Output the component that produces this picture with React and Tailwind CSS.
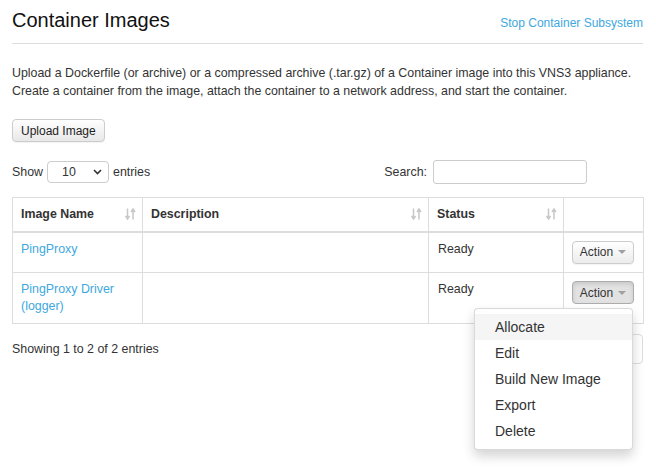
import { useState } from 'react'

function SortIcon() {
  return (
    <svg width="11" height="12" viewBox="0 0 11 12" className="shrink-0 text-[#c8c8c8]">
      <path d="M2.5 0.5 V10.5 M0.5 8 L2.5 11 L4.5 8" fill="none" stroke="currentColor" strokeWidth="1.5" />
      <path d="M8 11.5 V1.5 M6 4 L8 1 L10 4" fill="none" stroke="currentColor" strokeWidth="1.5" />
    </svg>
  )
}

function Caret() {
  return <span className="ml-[5px] inline-block h-0 w-0 border-x-[4px] border-t-[4px] border-x-transparent border-t-[#a0a0a0]" />
}

function ActionButton({ active }) {
  return (
    <button
      className={
        'flex h-[23px] w-[62px] items-center justify-center rounded-[4px] border text-[12px] text-[#333] ' +
        (active
          ? 'border-[#adadad] bg-[#e2e2e2] shadow-[inset_0_2px_4px_rgba(0,0,0,0.12)]'
          : 'border-[#ccc] bg-gradient-to-b from-white to-[#ececec] shadow-[0_1px_1px_rgba(0,0,0,0.05)]')
      }
    >
      Action
      <Caret />
    </button>
  )
}

const menuItems = ['Allocate', 'Edit', 'Build New Image', 'Export', 'Delete']

export default function App() {
  const [hover, setHover] = useState('Allocate')
  const rows = [
    { name: ['PingProxy'], status: 'Ready' },
    { name: ['PingProxy Driver', '(logger)'], status: 'Ready', open: true },
  ]

  return (
    <div className="min-h-screen bg-white pl-[12px] pr-[13px] font-['Liberation_Sans',Arial,sans-serif] text-[12.4px] text-[#333]">
      <div className="box-border flex h-[44px] items-baseline justify-between border-b border-[#ddd] pt-[8px]">
        <h1 className="text-[20px] leading-[24px] text-[#111]">Container Images</h1>
        <a className="text-[12px] text-[#3ea8de]">Stop Container Subsystem</a>
      </div>

      <p className="mt-[20px] leading-[18px]">
        Upload a Dockerfile (or archive) or a compressed archive (.tar.gz) of a Container image into this VNS3 appliance.
        <br />
        Create a container from the image, attach the container to a network address, and start the container.
      </p>

      <button className="mt-[19px] h-[23px] rounded-[4px] border border-[#ccc] bg-gradient-to-b from-white to-[#e8e8e8] px-[8px] text-[12px] text-[#222] shadow-[0_1px_1px_rgba(0,0,0,0.05)]">
        Upload Image
      </button>

      <div className="mt-[18px] flex items-center">
        <span>Show</span>
        <div className="mx-[4px] flex h-[22px] w-[62px] items-center justify-between rounded-[4px] border border-[#ccc] bg-white pl-[14px] pr-[6px]">
          <span>10</span>
          <svg width="9" height="6" viewBox="0 0 9 6">
            <path d="M1 1 L4.5 4.5 L8 1" fill="none" stroke="#333" strokeWidth="1.6" />
          </svg>
        </div>
        <span>entries</span>
        <div className="ml-auto mr-[56px] flex items-center gap-[6px]">
          <span>Search:</span>
          <div className="h-[24px] w-[154px] rounded-[3px] border border-[#ccc] bg-white" />
        </div>
      </div>

      <table className="mt-[13px] w-full table-fixed border-collapse">
        <colgroup>
          <col className="w-[130px]" />
          <col className="w-[286px]" />
          <col className="w-[135px]" />
          <col className="w-[80px]" />
        </colgroup>
        <thead>
          <tr className="h-[34px]">
            {['Image Name', 'Description', 'Status'].map((h) => (
              <th key={h} className="border border-b-2 border-[#ddd] pl-[8px] pr-[6px] text-left align-middle font-bold">
                <div className="flex items-center justify-between">
                  <span>{h}</span>
                  <SortIcon />
                </div>
              </th>
            ))}
            <th className="border border-b-2 border-[#ddd]" />
          </tr>
        </thead>
        <tbody>
          {rows.map((r, i) => (
            <tr key={i} className={r.open ? 'h-[51px]' : 'h-[41px]'}>
              <td className="border border-[#ddd] px-[8px] pt-[8px] align-top leading-[17px] text-[#3ea8de]">
                {r.name.map((n) => (
                  <div key={n}>{n}</div>
                ))}
              </td>
              <td className="border border-[#ddd]" />
              <td className="border border-[#ddd] px-[9px] pt-[8px] align-top leading-[17px]">{r.status}</td>
              <td className="border border-[#ddd] px-[8px] pt-[8px] align-top">
                <div className="relative">
                  <ActionButton active={r.open} />
                  {r.open ? (
                    <div className="absolute right-[2px] top-[27px] z-10 w-[159px] rounded-[4px] border border-[rgba(0,0,0,0.15)] bg-white py-[5px] shadow-[0_6px_12px_rgba(0,0,0,0.175)]">
                      {menuItems.map((m) => (
                        <div
                          key={m}
                          onMouseEnter={() => setHover(m)}
                          className={
                            'h-[26px] pl-[20px] text-[14px] leading-[26px] text-[#333] ' +
                            (hover === m ? 'bg-[#f5f5f5]' : '')
                          }
                        >
                          {m}
                        </div>
                      ))}
                    </div>
                  ) : null}
                </div>
              </td>
            </tr>
          ))}
        </tbody>
      </table>

      <div className="mt-[10px] flex items-center justify-between">
        <span>Showing 1 to 2 of 2 entries</span>
        <div className="flex h-[30px] overflow-hidden rounded-[4px] border border-[#ddd] text-[#999]">
          <span className="flex items-center border-r border-[#ddd] px-[12px]">Previous</span>
          <span className="flex items-center px-[12px]">Next</span>
        </div>
      </div>
    </div>
  )
}
